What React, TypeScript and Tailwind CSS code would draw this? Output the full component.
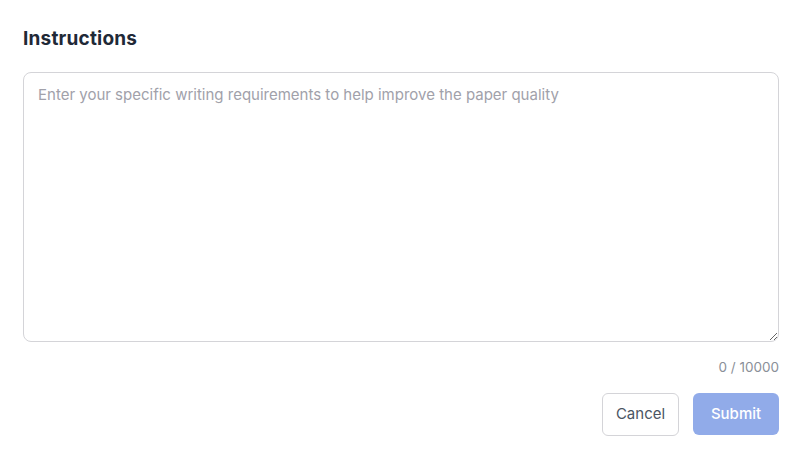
import React from "react";

export default function App() {
  return (
    <div className="w-[791px] h-[460px] bg-white pl-[23px] pr-[12px] pt-[26px]" style={{ fontFamily: "Inter, 'Noto Sans', sans-serif" }}>
      <h2 className="text-[19px] font-bold text-[#1f2937] leading-[26px] tracking-[0.2px]">Instructions</h2>
      <textarea
        className="mt-[20px] block w-full h-[270px] rounded-[8px] border border-[#d4d4d8] px-[14px] py-[11px] text-[15px] leading-[22px] text-[#1f2937] placeholder:text-[#a1a1aa] outline-none"
        placeholder="Enter your specific writing requirements to help improve the paper quality"
      />
      <div className="mt-[16px] text-right text-[13.5px] leading-[18px] text-[#8a8f98]">0 / 10000</div>
      <div className="mt-[17px] flex justify-end gap-[14px]">
        <button className="h-[43px] w-[77px] rounded-[6px] border border-[#d4d4d8] bg-white text-[15px] text-[#4b5563]">Cancel</button>
        <button className="h-[42px] w-[86px] rounded-[6px] bg-[#91abe9] text-[15px] font-medium text-white">Submit</button>
      </div>
    </div>
  );
}
